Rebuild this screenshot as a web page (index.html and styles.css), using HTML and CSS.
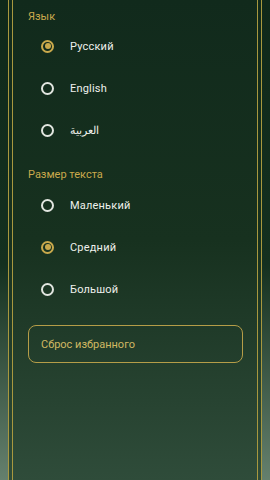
FILE: index.html
```html
<!DOCTYPE html>
<html lang="ru">
<head>
  <meta charset="UTF-8" />
  <meta name="viewport" content="width=device-width, initial-scale=1.0"/>
  <title>Настройки</title>
  <link rel="stylesheet" href="styles.css">
</head>
<body>
  <div class="frame">
    <div class="frame-inner">
      <div class="section-title">Язык</div>
      <div class="option-list">
        <div class="option selected"><span class="radio"></span><span class="option-label">Русский</span></div>
        <div class="option"><span class="radio"></span><span class="option-label">English</span></div>
        <div class="option"><span class="radio"></span><span class="option-label">العربية</span></div>
      </div>

      <div class="section-title second">Размер текста</div>
      <div class="option-list">
        <div class="option"><span class="radio"></span><span class="option-label">Маленький</span></div>
        <div class="option selected"><span class="radio"></span><span class="option-label">Средний</span></div>
        <div class="option"><span class="radio"></span><span class="option-label">Большой</span></div>
      </div>

      <button class="reset-btn">Сброс избранного</button>
    </div>
  </div>
</body>
</html>
```
FILE: styles.css
```css
:root {
  --gold: #c9a94c;
  --gold-line: #a8983f;
  --text: #eef0ec;
}
html, body {
  height: 100%;
}
body {
  margin: 0;
  font-family: Roboto, "Noto Sans", sans-serif;
  background: linear-gradient(#0f281a 0%, #14301f 55%, #65806d 100%);
  overflow: hidden;
}
.frame {
  margin: 0 8px;
  height: 480px;
  box-sizing: border-box;
  border-left: 1px solid var(--gold-line);
  border-right: 1px solid var(--gold-line);
  padding: 0 3px;
  background: linear-gradient(#112a1c 0%, #17311f 50%, #2f4c3a 100%);
}
.frame-inner {
  height: 100%;
  box-sizing: border-box;
  border-left: 1px solid var(--gold-line);
  border-right: 1px solid var(--gold-line);
  padding: 10px 14px 0 15px;
}
.section-title {
  color: var(--gold);
  font-size: 11px;
  line-height: 14px;
  margin-bottom: 1px;
}
.section-title.first-bold {
  font-weight: 700;
}
.section-title.second {
  margin-top: 17px;
  margin-bottom: 2px;
}
.option {
  height: 42px;
  display: flex;
  align-items: center;
  padding-left: 13px;
}
.radio {
  width: 13px;
  height: 13px;
  box-sizing: border-box;
  border: 2px solid #e2e6e0;
  border-radius: 50%;
  display: flex;
  align-items: center;
  justify-content: center;
  flex-shrink: 0;
}
.option.selected .radio {
  border-color: var(--gold);
}
.option.selected .radio::after {
  content: '';
  width: 6px;
  height: 6px;
  border-radius: 50%;
  background: var(--gold);
}
.option-label {
  margin-left: 16px;
  color: var(--text);
  font-size: 11px;
  letter-spacing: 0.2px;
}
.reset-btn {
  display: block;
  width: 100%;
  height: 38px;
  margin-top: 15px;
  box-sizing: border-box;
  border: 1px solid #b59d48;
  border-radius: 8px;
  background: transparent;
  padding: 0 12px;
  text-align: left;
  color: #d0b862;
  font-family: Roboto, "Noto Sans", sans-serif;
  font-size: 11px;
}
```
